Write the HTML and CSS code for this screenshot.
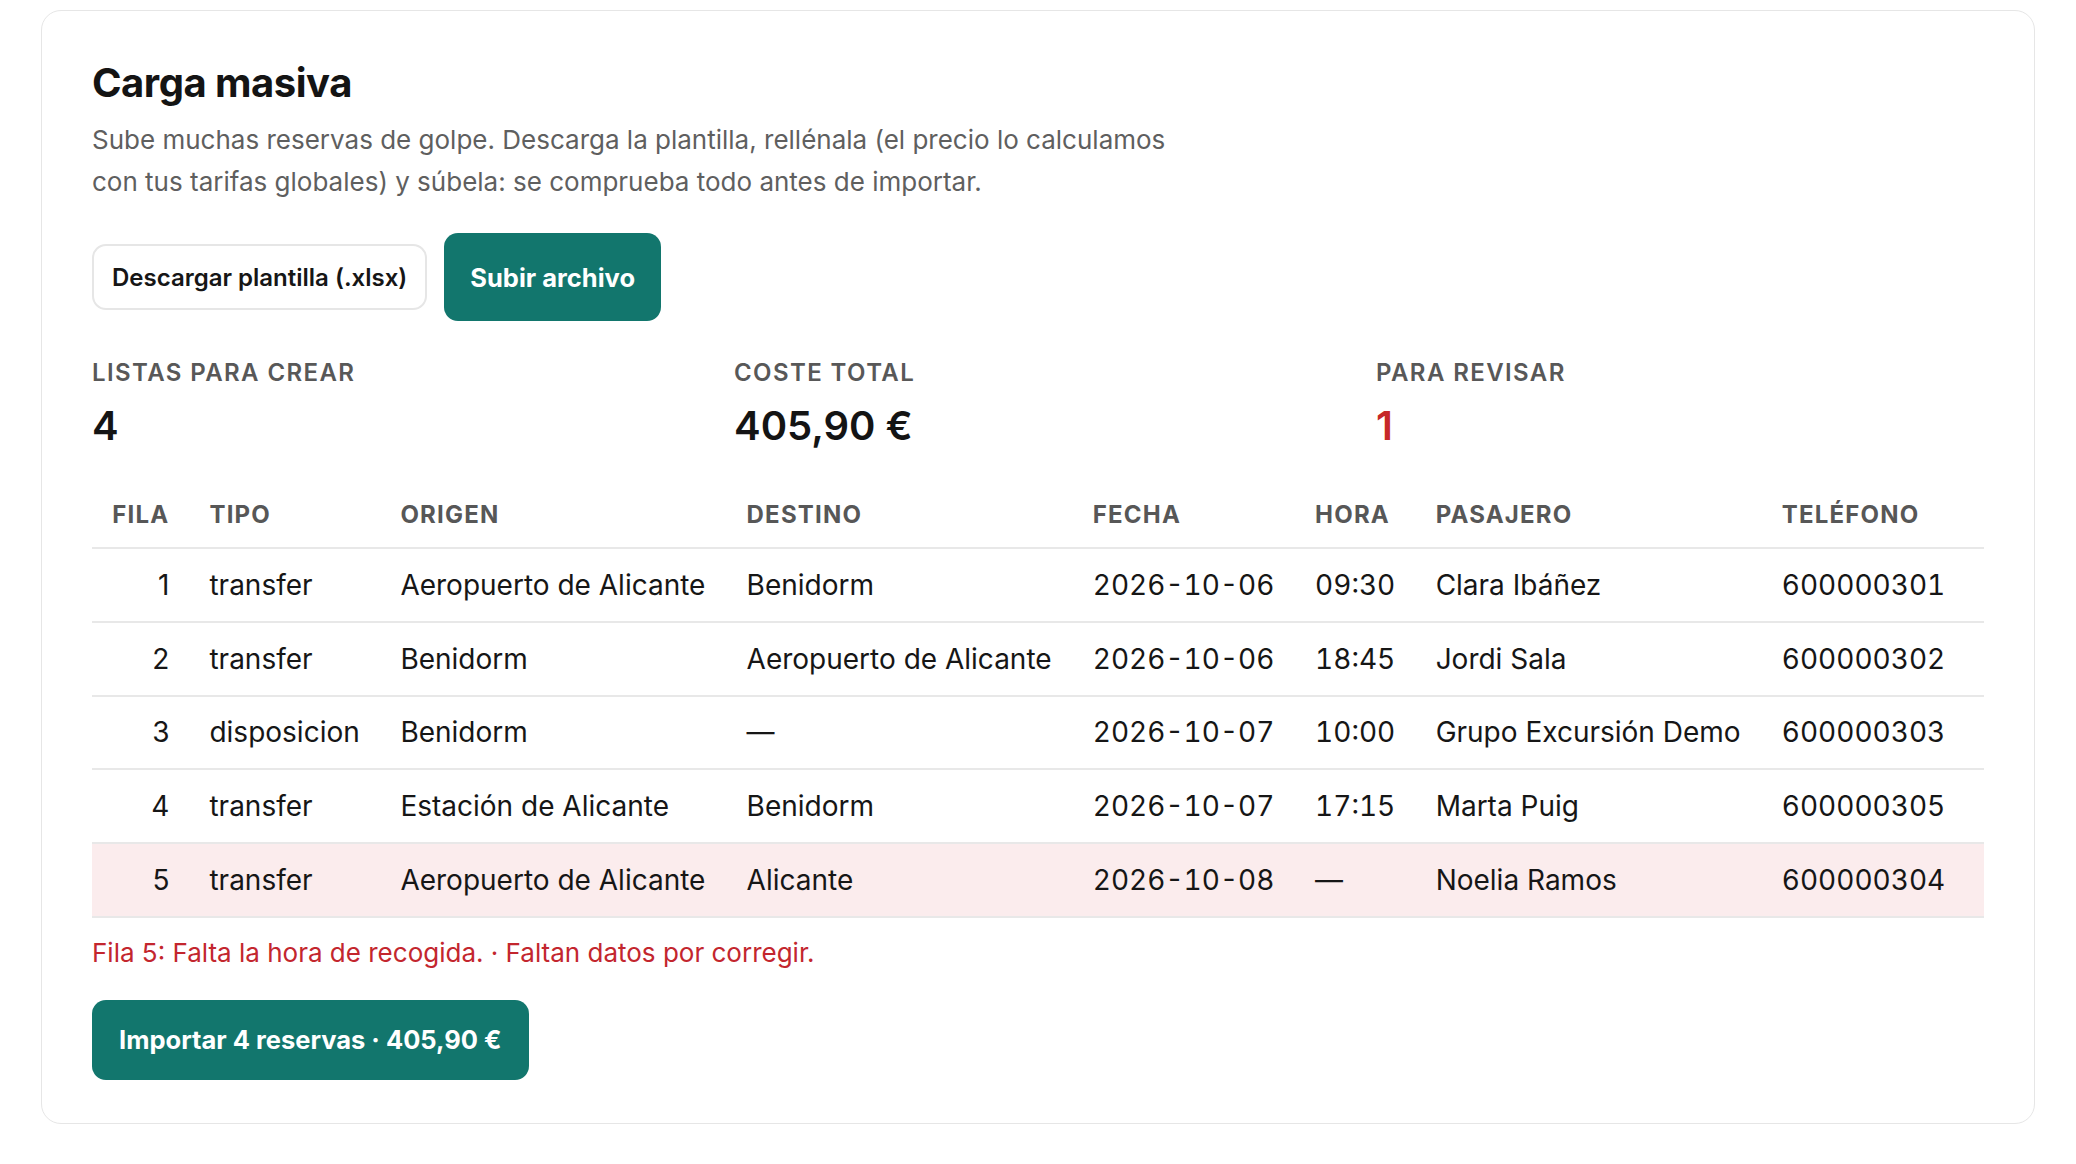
FILE: index.html
```html
<!DOCTYPE html>
<html lang="es">
<head>
<meta charset="utf-8">
<title>Carga masiva</title>
<link rel="stylesheet" href="styles.css">
</head>
<body>
<main class="page">
  <section class="card">
    <h1 class="title">Carga masiva</h1>
    <p class="intro">Sube muchas reservas de golpe. Descarga la plantilla, rellénala (el precio lo calculamos con tus tarifas globales) y súbela: se comprueba todo antes de importar.</p>

    <div class="actions">
      <button class="btn btn-outline" type="button">Descargar plantilla (.xlsx)</button>
      <label class="btn btn-primary btn-upload">Subir archivo<input type="file" class="file-input" accept=".xlsx"></label>
    </div>

    <div class="stats">
      <div class="stat">
        <div class="stat-label">Listas para crear</div>
        <div class="stat-value">4</div>
      </div>
      <div class="stat">
        <div class="stat-label">Coste total</div>
        <div class="stat-value">405,90 €</div>
      </div>
      <div class="stat">
        <div class="stat-label">Para revisar</div>
        <div class="stat-value stat-value-alert">1</div>
      </div>
    </div>

    <table class="preview">
      <thead>
        <tr>
          <th class="num">Fila</th>
          <th>Tipo</th>
          <th>Origen</th>
          <th>Destino</th>
          <th>Fecha</th>
          <th>Hora</th>
          <th>Pasajero</th>
          <th>Teléfono</th>
        </tr>
      </thead>
      <tbody>
        <tr>
          <td class="num">1</td>
          <td>transfer</td>
          <td>Aeropuerto de Alicante</td>
          <td>Benidorm</td>
          <td class="mono">2026-10-06</td>
          <td class="mono">09:30</td>
          <td>Clara Ibáñez</td>
          <td class="mono">600000301</td>
        </tr>
        <tr>
          <td class="num">2</td>
          <td>transfer</td>
          <td>Benidorm</td>
          <td>Aeropuerto de Alicante</td>
          <td class="mono">2026-10-06</td>
          <td class="mono">18:45</td>
          <td>Jordi Sala</td>
          <td class="mono">600000302</td>
        </tr>
        <tr>
          <td class="num">3</td>
          <td>disposicion</td>
          <td>Benidorm</td>
          <td>—</td>
          <td class="mono">2026-10-07</td>
          <td class="mono">10:00</td>
          <td>Grupo Excursión Demo</td>
          <td class="mono">600000303</td>
        </tr>
        <tr>
          <td class="num">4</td>
          <td>transfer</td>
          <td>Estación de Alicante</td>
          <td>Benidorm</td>
          <td class="mono">2026-10-07</td>
          <td class="mono">17:15</td>
          <td>Marta Puig</td>
          <td class="mono">600000305</td>
        </tr>
        <tr class="row-error">
          <td class="num">5</td>
          <td>transfer</td>
          <td>Aeropuerto de Alicante</td>
          <td>Alicante</td>
          <td class="mono">2026-10-08</td>
          <td class="mono">—</td>
          <td>Noelia Ramos</td>
          <td class="mono">600000304</td>
        </tr>
      </tbody>
    </table>

    <p class="error-msg">Fila 5: Falta la hora de recogida. · Faltan datos por corregir.</p>

    <button class="btn btn-primary btn-import" type="button">Importar 4 reservas · 405,90 €</button>
  </section>
</main>
</body>
</html>
```

FILE: styles.css
```css
* {
  box-sizing: border-box;
}

html,
body {
  margin: 0;
  background: #ffffff;
}

body {
  font-family: Inter, "Noto Sans", "Liberation Sans", sans-serif;
  color: #171717;
}

.page {
  padding: 10px 41px 40px;
}

.card {
  border: 1px solid #e6e6e6;
  border-radius: 20px;
  padding: 48px 50px 43px;
  background: #ffffff;
}

.title {
  margin: 0;
  font-size: 40px;
  line-height: 48px;
  font-weight: 700;
  letter-spacing: -0.5px;
  color: #141414;
}

.intro {
  margin: 12px 0 0;
  max-width: 1110px;
  font-size: 26px;
  line-height: 42px;
  color: #5f5f5f;
}

/* buttons */
.actions {
  display: flex;
  align-items: center;
  gap: 17px;
  margin-top: 30px;
}

.btn {
  display: inline-flex;
  align-items: center;
  justify-content: center;
  font-family: inherit;
  border-radius: 14px;
  cursor: pointer;
}

.btn-outline {
  height: 66px;
  padding: 0 18px;
  font-size: 24px;
  font-weight: 600;
  background: #ffffff;
  color: #161616;
  border: 2px solid #e6e6e6;
}

.btn-primary {
  background: #12766d;
  color: #ffffff;
  border: 0;
  font-size: 25.5px;
  font-weight: 700;
}

.btn-upload {
  height: 88px;
  padding: 0 26px;
}

.file-input {
  display: none;
}

/* summary figures */
.stats {
  display: grid;
  grid-template-columns: repeat(3, 1fr);
  gap: 34px;
  margin-top: 37px;
}

.stat-label {
  font-size: 24px;
  line-height: 30px;
  font-weight: 600;
  text-transform: uppercase;
  letter-spacing: 1.4px;
  color: #585858;
}

.stat-value {
  margin-top: 15px;
  font-size: 40px;
  line-height: 46px;
  font-weight: 600;
  color: #141414;
}

.stat-value-alert {
  color: #c62828;
}

/* preview table */
.preview {
  width: 100%;
  margin-top: 33px;
  border-collapse: collapse;
}

.preview th,
.preview td {
  padding: 0 20px;
  text-align: left;
  white-space: nowrap;
  border-bottom: 2px solid #e8e8e8;
}

.preview th:last-child,
.preview td:last-child {
  padding-right: 38px;
}

.preview th {
  height: 66px;
  font-size: 24px;
  font-weight: 700;
  text-transform: uppercase;
  letter-spacing: 1.2px;
  color: #575757;
}

.preview td {
  height: 73.8px;
  font-size: 28px;
  color: #161616;
}

.preview .num {
  text-align: right;
}

.preview .mono {
  font-variant-numeric: tabular-nums;
}

.row-error td {
  background: #fbeced;
}

.error-msg {
  margin: 17px 0 0;
  font-size: 26px;
  line-height: 36px;
  color: #c3262e;
}

.btn-import {
  margin-top: 29px;
  height: 80px;
  padding: 0 27px;
}
```
